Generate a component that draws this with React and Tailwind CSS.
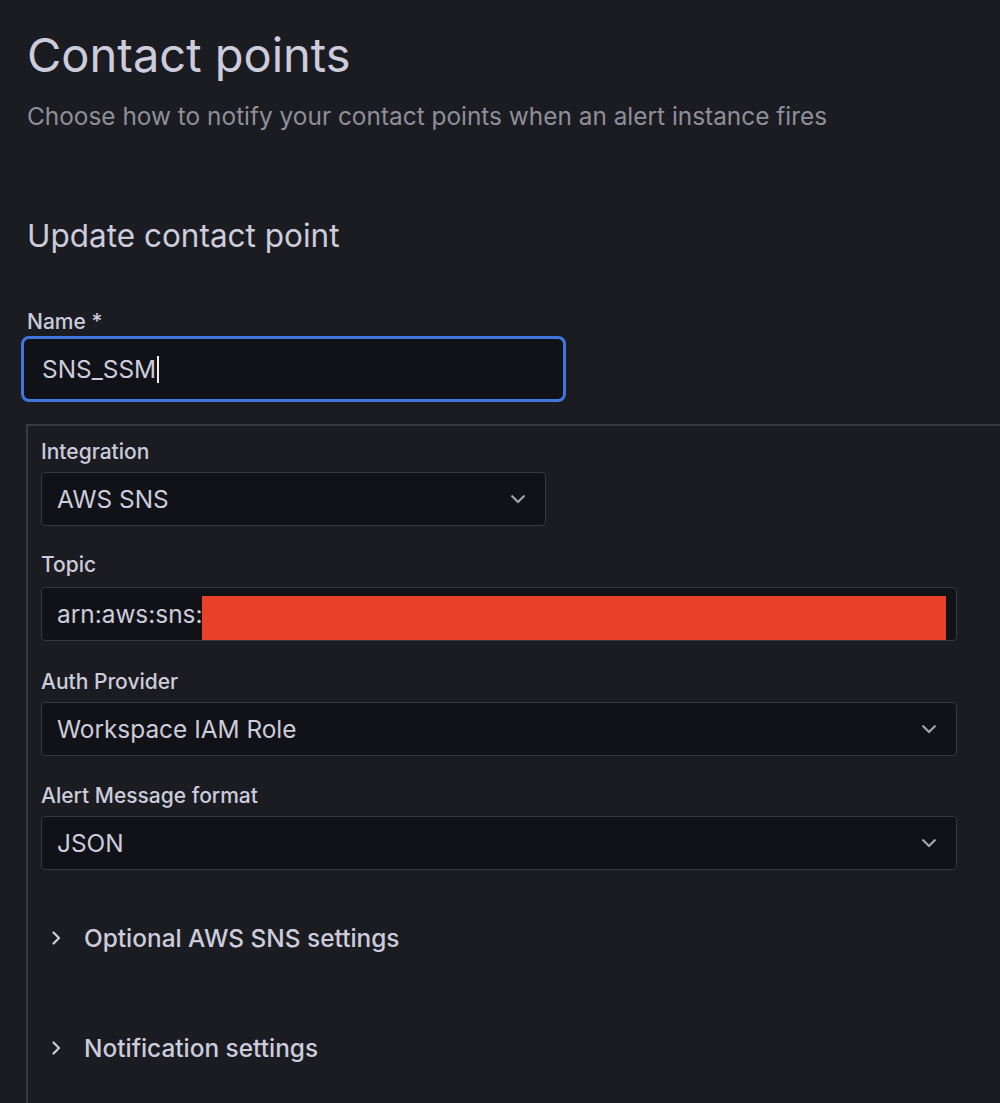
export default function App() {
  const ChevronDown = () => (
    <svg width="14" height="9" viewBox="0 0 14 9" fill="none">
      <path d="M1.2 1.2L7 7l5.8-5.8" stroke="#a3a4ad" strokeWidth="2.2" strokeLinecap="round" strokeLinejoin="round" />
    </svg>
  );
  const ChevronRight = () => (
    <svg width="9" height="14" viewBox="0 0 9 14" fill="none">
      <path d="M1.5 1.5L7 7l-5.5 5.5" stroke="#ccccdc" strokeWidth="2.2" strokeLinecap="round" strokeLinejoin="round" />
    </svg>
  );
  const Label = ({ children, className = "" }) => (
    <div className={"text-[21px] leading-[24px] font-medium text-[#ccccdc] " + className}>{children}</div>
  );
  const Select = ({ value, className = "" }) => (
    <div className={"h-[54px] rounded-[4px] border-[1.5px] border-[#37383e] bg-[#111217] flex items-center justify-between pl-[15px] pr-[20px] " + className}>
      <span className="text-[24.4px] text-[#ccccdc]">{value}</span>
      <ChevronDown />
    </div>
  );
  return (
    <div
      className="min-h-[1103px] w-full overflow-hidden bg-[#1b1c21] pl-[27px] pt-[27px]"
      style={{ fontFamily: "Inter, 'Noto Sans', sans-serif" }}
    >
      <h1 className="text-[47px] leading-[56px] font-normal text-[#ccccdc]">Contact points</h1>
      <p className="mt-[17px] text-[24.4px] leading-[32px] text-[#8e8f99]">
        Choose how to notify your contact points when an alert instance fires
      </p>
      <h2 className="mt-[86px] text-[31.5px] leading-[36px] font-normal text-[#ccccdc]">Update contact point</h2>

      <Label className="mt-[56px]">Name *</Label>
      <div className="mt-[2px] -ml-[6px] h-[66px] w-[545px] rounded-[8px] border-[3px] border-[#4176de] bg-[#111217] flex items-center pl-[18px]">
        <span className="text-[24.4px] text-[#ccccdc]">SNS_SSM</span>
        <span className="inline-block w-[2px] h-[27px] bg-[#f0f0f0] ml-[1px]" />
      </div>

      <div className="mt-[22px] -ml-[1px] w-[1000px] min-h-[700px] border-l-2 border-t-2 border-r-2 border-[#393a40] pl-[13px] pt-[14px]">
        <Label className="mb-[8px]">Integration</Label>
        <Select value="AWS SNS" className="w-[505px]" />

        <Label className="mt-[27px] mb-[10px]">Topic</Label>
        <div className="h-[54px] w-[916px] rounded-[4px] border-[1.5px] border-[#37383e] bg-[#111217] flex items-stretch pl-[15px]">
          <span className="self-center text-[24.4px] text-[#ccccdc] whitespace-nowrap">arn:aws:sns:</span>
          <div className="flex-1 mr-[10px] mt-[8px] bg-[#e8412a]" />
        </div>

        <Label className="mt-[29px] mb-[8px]">Auth Provider</Label>
        <Select value="Workspace IAM Role" className="w-[916px]" />

        <Label className="mt-[28px] mb-[8px]">Alert Message format</Label>
        <Select value="JSON" className="w-[916px]" />

        <div className="mt-[53px] flex items-center h-[30px]">
          <span className="ml-[11px] flex"><ChevronRight /></span>
          <span className="ml-[23px] text-[24.4px] leading-[30px] font-medium text-[#ccccdc]">Optional AWS SNS settings</span>
        </div>
        <div className="mt-[80px] flex items-center h-[30px]">
          <span className="ml-[11px] flex"><ChevronRight /></span>
          <span className="ml-[23px] text-[24.4px] leading-[30px] font-medium text-[#ccccdc]">Notification settings</span>
        </div>
      </div>
    </div>
  );
}
